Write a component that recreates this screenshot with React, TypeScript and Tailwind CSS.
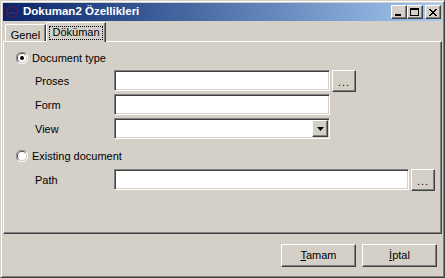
const FONT = { fontFamily: '"Liberation Sans", Arial, sans-serif' };

const raised =
  "bg-[#d4d0c8] border border-t-white border-l-white border-b-[#404040] border-r-[#404040] shadow-[inset_-1px_-1px_0_#808080]";
const sunken =
  "bg-white border border-t-[#808080] border-l-[#808080] border-b-white border-r-white shadow-[inset_1px_1px_0_#404040,inset_-1px_-1px_0_#d4d0c8]";

function Radio({ checked }: { checked?: boolean }) {
  return (
    <svg width="12" height="12" viewBox="0 0 12 12" className="shrink-0">
      <path d="M10.2 1.8 A5.5 5.5 0 0 0 1.8 10.2" stroke="#808080" fill="none" />
      <path d="M1.8 10.2 A5.5 5.5 0 0 0 10.2 1.8" stroke="#ffffff" fill="none" />
      <path d="M9.2 2.8 A4.5 4.5 0 0 0 2.8 9.2" stroke="#404040" fill="none" />
      <path d="M2.8 9.2 A4.5 4.5 0 0 0 9.2 2.8" stroke="#d4d0c8" fill="none" />
      <circle cx="6" cy="6" r="4" fill="#fff" />
      {checked && <circle cx="6" cy="6" r="2" fill="#000" />}
    </svg>
  );
}

function Browse() {
  return (
    <div className={`${raised} w-[24px] h-[22px] ml-[2px] flex items-center justify-center`}>
      <span className="text-[11px] leading-none tracking-[1px] mt-[2px]">...</span>
    </div>
  );
}

function Field({ label, w, children }: { label: string; w: number; children?: React.ReactNode }) {
  return (
    <div className="flex items-start ml-[31px]">
      <div className="w-[79px] h-[21px] flex items-center text-[11px] pt-[2px]">{label}</div>
      <div className={`${sunken} h-[21px]`} style={{ width: w }} />
      {children}
    </div>
  );
}

function TitleButton({ kind, className = "" }: { kind: "min" | "max" | "close"; className?: string }) {
  return (
    <div className={`${raised} w-[16px] h-[14px] flex items-center justify-center ${className}`}>
      <svg width="10" height="9" viewBox="0 0 10 9">
        {kind === "min" && <rect x="1" y="6" width="6" height="2" fill="#000" />}
        {kind === "max" && (
          <>
            <rect x="0.5" y="0.5" width="8" height="7" fill="none" stroke="#000" />
            <rect x="0" y="0" width="9" height="2" fill="#000" />
          </>
        )}
        {kind === "close" && (
          <path d="M1 1 L8 8 M2 1 L9 8 M8 1 L1 8 M9 1 L2 8" stroke="#000" strokeWidth="1" />
        )}
      </svg>
    </div>
  );
}

export default function App() {
  return (
    <div
      className="w-[445px] h-[278px] bg-[#d4d0c8] border border-t-[#d4d0c8] border-l-[#d4d0c8] border-b-[#404040] border-r-[#404040] shadow-[inset_1px_1px_0_#ffffff,inset_-1px_-1px_0_#808080] p-[2px] flex flex-col text-black"
      style={FONT}
    >
      {/* Title bar */}
      <div className="h-[18px] flex items-center bg-gradient-to-r from-[#0a246a] to-[#a6caf0] pl-[2px] pr-[1px]">
        <svg width="14" height="14" viewBox="0 0 14 14" className="shrink-0">
          <circle cx="7" cy="7" r="5.5" fill="#1a2060" stroke="#5a2050" strokeWidth="1.2" />
          <path d="M4 8 h2 M7 7 v2 M9 8 h1.5" stroke="#2a40a0" strokeWidth="1" />
        </svg>
        <span className="ml-[4px] text-white font-bold text-[11.5px] leading-none">Dokuman2 Özellikleri</span>
        <div className="ml-auto flex items-center">
          <TitleButton kind="min" />
          <TitleButton kind="max" />
          <TitleButton kind="close" className="ml-[2px]" />
        </div>
      </div>

      {/* Tabs */}
      <div className="h-[20px] flex items-end pl-[2px]">
        <div className="w-[41px] h-[17px] border-l border-t border-white border-r border-r-[#404040] shadow-[inset_-1px_0_0_#808080] rounded-tl-[2px] flex justify-center pt-[2px] text-[11px]">
          Genel
        </div>
        <div className="relative z-10 w-[60px] h-[20px] mb-[-1px] bg-[#d4d0c8] border-l border-t border-white border-r border-r-[#404040] shadow-[inset_-1px_0_0_#808080] rounded-tl-[2px] flex justify-center pt-[4px]">
          <span className="text-[11px] leading-[11px] h-[12px] px-[2px] outline outline-1 outline-dotted outline-black">Döküman</span>
        </div>
      </div>

      {/* Panel */}
      <div className="h-[193px] border border-t-white border-l-white border-b-[#404040] border-r-[#404040] shadow-[inset_-1px_-1px_0_#808080] flex flex-col pt-[8px]">
        <div className="h-[16px] flex items-center pl-[12px] gap-[4px] text-[11px]">
          <Radio checked />
          <span>Document type</span>
        </div>
        <div className="mt-[4px]">
          <Field label="Proses" w={216}>
            <Browse />
          </Field>
        </div>
        <div className="mt-[2px]">
          <Field label="Form" w={216} />
        </div>
        <div className="mt-[3px] flex items-start ml-[31px]">
          <div className="w-[79px] h-[21px] flex items-center text-[11px] pt-[2px]">View</div>
          <div className={`${sunken} w-[216px] h-[21px] flex justify-end p-[1px]`}>
            <div className={`${raised} w-[16px] h-[17px] flex items-center justify-center`}>
              <svg width="7" height="4" viewBox="0 0 7 4">
                <path d="M0 0 H7 L3.5 4 Z" fill="#000" />
              </svg>
            </div>
          </div>
        </div>
        <div className="mt-[9px] h-[16px] flex items-center pl-[12px] gap-[4px] text-[11px]">
          <Radio />
          <span>Existing document</span>
        </div>
        <div className="mt-[5px]">
          <Field label="Path" w={295}>
            <Browse />
          </Field>
        </div>
      </div>

      {/* Bottom buttons */}
      <div className="flex-1 flex justify-end items-start pt-[10px] pr-[5px] gap-[6px]">
        <div className={`${raised} w-[75px] h-[23px] flex items-center justify-center text-[11px]`}>
          <span><span className="underline">T</span>amam</span>
        </div>
        <div className={`${raised} w-[75px] h-[23px] flex items-center justify-center text-[11px]`}>
          <span><span className="underline">İ</span>ptal</span>
        </div>
      </div>
    </div>
  );
}
